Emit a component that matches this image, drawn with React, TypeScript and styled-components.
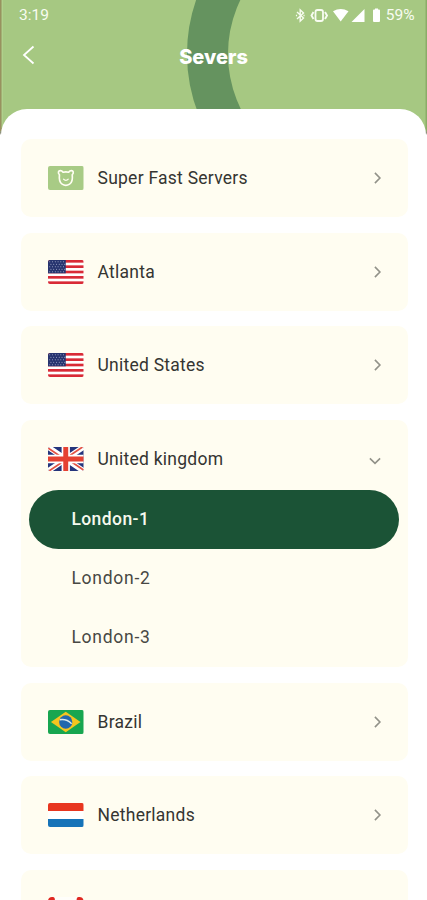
import React from "react";
import styled, { createGlobalStyle } from "styled-components";

const GlobalStyle = createGlobalStyle`
  * { box-sizing: border-box; }
  html, body { margin: 0; padding: 0; overflow: hidden; }
  body { background: #fff; }
`;

const Screen = styled.main`
  width: 427px;
  height: 900px;
  overflow: hidden;
  display: flex;
  flex-direction: column;
  background: linear-gradient(#a6c882 0 126px, #8d8f7c 133px, #fff 135px);
  font-family: Roboto, sans-serif;
  position: relative;
`;

const HeaderArt = styled.svg`
  position: absolute;
  inset: 0;
  width: 427px;
  height: 136px;
`;

const StatusBar = styled.div`
  position: relative;
  display: flex;
  align-items: center;
  justify-content: space-between;
  height: 31px;
  padding: 0 12.5px 0 19px;
  color: #f8fcf1;
  font-size: 15.5px;
  line-height: 31px;
`;

const StatusIcons = styled.div`
  display: flex;
  align-items: center;
  gap: 6px;
`;

const StatusSvg = styled.svg`
  display: block;
`;

const TitleBar = styled.header`
  position: relative;
  display: grid;
  grid-template-columns: 60px 1fr 60px;
  align-items: center;
  height: 78px;
  padding-bottom: 30px;
`;

const BackButton = styled.button`
  border: 0;
  background: none;
  padding: 0 0 0 22px;
  height: 32px;
  display: flex;
  align-items: center;
`;

const Title = styled.h1`
  margin: 4px 0 0;
  text-align: center;
  color: #fff;
  font: 800 20px/28px Inter, sans-serif;
  letter-spacing: 0;
`;

const Sheet = styled.section`
  position: relative;
  flex: 1;
  min-height: 0;
  margin: 0 1px;
  padding: 30px 18.5px 0 20px;
  display: flex;
  flex-direction: column;
  gap: 15.5px;
  background: #fff;
  border-radius: 26px 26px 0 0;
`;

const Card = styled.article`
  flex: none;
  background: #fffdf1;
  border-radius: 10px;
`;

const CardRow = styled.div<{ $open?: boolean }>`
  display: flex;
  align-items: center;
  height: ${(p) => (p.$open ? 70.3 : 78)}px;
  padding: 0 25px 0 27px;
  ${(p) => p.$open && "padding-top: 8.7px;"}
`;

const Flag = styled.svg`
  display: block;
  flex: none;
  width: 35.5px;
  height: 24px;
  border-radius: 2px;
  margin-right: 14px;
`;

const Name = styled.span`
  flex: 1;
  color: #353532;
  font-size: 17.5px;
  line-height: 24px;
  letter-spacing: 0.25px;
  white-space: nowrap;
`;

const Arrow = styled.svg<{ $open?: boolean }>`
  flex: none;
  width: 12px;
  height: 12px;
  transform: ${(p) => (p.$open ? "translate(-2px, 1.5px) rotate(90deg)" : "none")};
`;

const Locations = styled.div`
  display: flex;
  flex-direction: column;
  padding: 0 9px 0 8px;
`;

const Location = styled.div<{ $active?: boolean }>`
  height: 59.1px;
  line-height: 59px;
  padding-left: 42.4px;
  border-radius: 30px;
  font-size: 17.5px;
  letter-spacing: ${(p) => (p.$active ? 0.42 : 0.75)}px;
  font-weight: ${(p) => (p.$active ? 500 : 400)};
  color: ${(p) => (p.$active ? "#f6f9ee" : "#484844")};
  background: ${(p) => (p.$active ? "#1b5336" : "transparent")};
`;

type FlagKind = "fast" | "us" | "uk" | "br" | "nl" | "ca";

const usStars = Array.from({ length: 5 }, (_, r) =>
  Array.from({ length: 6 }, (_, c) => ({ x: 1.8 + c * 2.8 + (r % 2) * 1.2, y: 1.7 + r * 2.5 }))
).flat();

function FlagArt({ kind }: { kind: FlagKind }) {
  return (
    <Flag viewBox="0 0 36 24" preserveAspectRatio="none" aria-hidden>
      {kind === "fast" && (
        <>
          <rect width="36" height="24" fill="#a8cb85" />
          <g fill="none" stroke="#fffef2" strokeWidth="1.7" strokeLinecap="round" strokeLinejoin="round">
            <path d="M11.6 8.8C9.8 6.8 10.4 4.7 12.5 4.7c1.4 0 2.1.6 2.8 1.5 1.8-.5 3.8-.5 5.6 0 .7-.9 1.4-1.5 2.8-1.5 2.1 0 2.7 2.1.9 4.1.5 4.5.2 7.5-2.7 9.3-2.4 1.5-5.2 1.5-7.6 0-2.9-1.8-3.2-4.8-2.7-9.3Z" />
            <path d="M15.8 13.2c1.2 1.5 3.5 1.5 4.7 0" strokeWidth="1.3" />
          </g>
        </>
      )}
      {kind === "us" && (
        <>
          <rect width="36" height="24" fill="#fff" />
          {[0, 1, 2, 3, 4].map((i) => (
            <rect key={i} y={i * 5.34} width="36" height="2.65" fill="#d92a36" />
          ))}
          <rect width="18" height="13.3" fill="#27346f" />
          {usStars.map((s, i) => (
            <circle key={i} cx={s.x} cy={s.y} r="0.5" fill="#b5bbd6" />
          ))}
        </>
      )}
      {kind === "uk" && (
        <>
          <rect width="36" height="24" fill="#25357c" />
          <path d="M0 0 36 24M36 0 0 24" stroke="#fff" strokeWidth="5.4" />
          <path d="M0 1 18 13M36 23 18 11M35 0 18 11.3M1 24 18 12.7" stroke="#e35143" strokeWidth="1.7" />
          <path d="M18 0V24M0 12H36" stroke="#fff" strokeWidth="8.4" />
          <path d="M18 0V24M0 12H36" stroke="#e54132" strokeWidth="5" />
        </>
      )}
      {kind === "br" && (
        <>
          <rect width="36" height="24" fill="#18a650" />
          <path d="M18 1.8 33 12 18 22.2 3 12Z" fill="#f5c51f" />
          <circle cx="18" cy="12" r="6.7" fill="#2167ad" />
          <path d="M12 9.8c4.5-.7 8.5.5 12 3.9" fill="none" stroke="#d8e8ed" strokeWidth="1.5" />
        </>
      )}
      {kind === "nl" && (
        <>
          <rect width="36" height="24" fill="#fff" />
          <rect width="36" height="8" fill="#e8361f" />
          <rect y="16" width="36" height="8" fill="#1673b8" />
        </>
      )}
      {kind === "ca" && (
        <>
          <rect x="6" width="24" height="24" fill="#fffefa" />
          <path d="M0 3.500Q.5 0 4 0H5Q7 0 7 3V24H0ZM29 3Q29 0 31 0H32Q35.500 0 36 3.500V24H29Z" fill="#e02822" />
          <path d="m18 4 1.5 3 2-.8-.5 4 2.5-2 .8 1.6 2.5-.3-1 3 1 .8-4.5 3.7.4 1.5-4-.5V21h-1.4v-3l-4 .5.4-1.5-4.5-3.7 1-.8-1-3 2.5.3.8-1.6 2.5 2-.5-4 2 .8Z" fill="#df3034" />
        </>
      )}
    </Flag>
  );
}

function Chevron({ open }: { open?: boolean }) {
  return (
    <Arrow $open={open} viewBox="0 0 12 12" fill="none" stroke="#929289" strokeWidth="1.6" aria-hidden>
      <path d="m3.9.9 5 5.1-5 5.1" />
    </Arrow>
  );
}

interface Server {
  name: string;
  flag: FlagKind;
  locations?: string[];
}

const servers: Server[] = [
  { name: "Super Fast Servers", flag: "fast" },
  { name: "Atlanta", flag: "us" },
  { name: "United States", flag: "us" },
  { name: "United kingdom", flag: "uk", locations: ["London-1", "London-2", "London-3"] },
  { name: "Brazil", flag: "br" },
  { name: "Netherlands", flag: "nl" },
  { name: "", flag: "ca" },
];

export default function App() {
  return (
    <>
      <GlobalStyle />
      <Screen>
        <HeaderArt viewBox="0 0 427 136" aria-hidden>
          <circle cx="352" cy="54" r="144.5" fill="none" stroke="#65935f" strokeWidth="41" />
          <rect width="1.7" height="131" fill="#98915f" />
          <rect x="1.7" width="1.3" height="128" fill="#afd08c" />
          <rect x="425.5" width="1.5" height="131" fill="#8bac68" />
        </HeaderArt>
        <StatusBar>
          <span>3:19</span>
          <StatusIcons>
            <StatusSvg width="85" height="16" viewBox="295 8 85 16" fill="none" stroke="#f8fcf1" strokeWidth="1.4" aria-hidden>
              <path d="m297 12 6.5 6-3.3 3.2V9.8l3.3 3.1-6.5 6" />
              <path d="M295.9 15.5h1.2m6.3 0h1.2" />
              <rect x="315.5" y="10" width="7.5" height="11" rx="2" strokeWidth="1.8" />
              <path d="m313.500 12-2 3.500 2 3.500m11.500-7 2 3.500-2 3.500" strokeWidth="1.9" />
              <path d="M333 11.3Q340.7 6.5 348.5 11.3L340.7 21.5Z" fill="#fff" stroke="none" />
              <path d="M364.5 9V22H351.5Z" fill="#fff" stroke="none" />
              <path d="M375 9.5V8.5h3v1h1q1 0 1 1v10.5q0 1-1 1h-5q-1 0-1-1V10.5q0-1 1-1Z" fill="#fff" stroke="none" />
            </StatusSvg>
            <span>59%</span>
          </StatusIcons>
        </StatusBar>
        <TitleBar>
          <BackButton aria-label="Back">
            <svg width="13" height="20" viewBox="0 0 13 20" fill="none" stroke="#fff" strokeWidth="1.8" aria-hidden>
              <path d="M11.5 1.5 2 10l9.5 8.5" />
            </svg>
          </BackButton>
          <Title>Severs</Title>
        </TitleBar>
        <Sheet>
          {servers.map((s) => (
            <Card key={s.flag + s.name}>
              <CardRow $open={!!s.locations}>
                <FlagArt kind={s.flag} />
                <Name>{s.name}</Name>
                <Chevron open={!!s.locations} />
              </CardRow>
              {s.locations && (
                <Locations>
                  {s.locations.map((name, i) => (
                    <Location key={name} $active={i === 0}>
                      {name}
                    </Location>
                  ))}
                </Locations>
              )}
            </Card>
          ))}
        </Sheet>
      </Screen>
    </>
  );
}
